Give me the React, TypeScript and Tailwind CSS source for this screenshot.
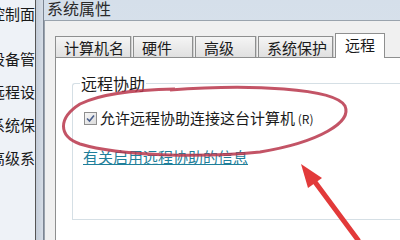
import React from 'react';

const font = { fontFamily: '"Noto Sans CJK SC", "Noto Sans", sans-serif' };

const tabs = [
  { t: '计算机名', w: 'w-[76px]' },
  { t: '硬件', w: 'w-[60px]' },
  { t: '高级', w: 'w-[61px]' },
  { t: '系统保护', w: 'w-[75px]' },
];
const sideItems = ['控制面', '设备管', '远程设', '系统保', '高级系'];

const App: React.FC = () => {
  return (
    <div className="relative w-[400px] h-[240px] overflow-hidden flex bg-white text-[#1a1a1a]" style={font}>
      {/* Left control panel strip */}
      <div className="w-[36px] shrink-0 bg-[#eef2f7] border-r border-[#555] flex flex-col pt-[3px] gap-[11px] overflow-hidden">
        {sideItems.map((t, i) => (
          <div key={t} className={`text-[15px] leading-[22px] whitespace-nowrap ml-[-10px] ${i === 0 ? 'mb-[12px]' : ''}`}>
            {t}
          </div>
        ))}
      </div>

      {/* Window frame */}
      <div className="w-[8px] shrink-0 bg-gradient-to-r from-[#c3ccd8] to-[#d6dde6] border-r border-[#7c8592]" />

      <div className="flex-1 flex flex-col bg-gradient-to-b from-[#d5dfea] to-[#e2e8ef]">
        <div className="h-[25px] shrink-0 pl-[3px] text-[16px] leading-[26px] text-[#2a2a2a] mt-[-5px]">系统属性</div>

        <div className="flex-1 flex flex-col bg-[#f0f0f0] border-t border-l border-[#9aa3ad] pl-[10px] pt-[15px]">
          {/* Tabs */}
          <div className="flex items-end h-[21px] shrink-0">
            {tabs.map(({ t, w }) => (
              <div
                key={t}
                className={`${w} h-[21px] pl-[8px] border border-b-0 border-r-0 border-[#8e8f8f] bg-gradient-to-b from-[#f5f5f5] to-[#e0e0e0] text-[15px] leading-[21px] whitespace-nowrap shadow-[inset_-1px_0_0_#8e8f8f,1px_0_0_#d0d0d0] mr-[2px]`}
              >
                {t}
              </div>
            ))}
            <div className="h-[25px] px-[9px] border border-b-0 border-[#8e8f8f] bg-white text-[15px] leading-[22px] whitespace-nowrap relative z-10 mb-[-1px]">
              远程
            </div>
          </div>

          {/* Tab panel */}
          <div className="flex-1 bg-white border-t border-l border-[#8e8f8f] pl-[16px] pt-[25px]">
            <div className="relative h-[137px] border border-r-0 border-[#d5dfe5] rounded-tl-[3px] bg-white">
              <div className="absolute left-[7px] top-[-12px] bg-white px-[1px] text-[16px] leading-[22px]">远程协助</div>
              <div className="flex items-center gap-[3px] mt-[24px] ml-[11px]">
                <div className="w-[13px] h-[13px] border border-[#8f8f8f] bg-gradient-to-br from-[#f6f6f6] to-[#dcdcdc] flex items-center justify-center">
                  <svg width="9" height="9" viewBox="0 0 9 9">
                    <path d="M1 4.5 L3.5 7 L8 1.5" fill="none" stroke="#4a5f8c" strokeWidth="1.6" />
                  </svg>
                </div>
                <span className="text-[15px] leading-[20px] whitespace-nowrap">
                  允许远程协助连接这台计算机<span className="text-[12px]"> (R)</span>
                </span>
              </div>
              <div className="mt-[18px] ml-[10px] text-[15px] leading-[20px] text-[#1f7f9a] underline whitespace-nowrap">
                有关启用远程协助的信息
              </div>
            </div>
          </div>
        </div>
      </div>

      {/* Red annotation */}
      <svg className="absolute left-0 top-0 pointer-events-none" width="400" height="240" viewBox="0 0 400 240">
        <path
          d="M170 90 C 250 84, 335 88, 345 106 C 352 122, 320 142, 260 152 C 200 158, 120 156, 80 144 C 58 136, 58 118, 80 104 C 100 94, 130 90, 175 89"
          fill="none"
          stroke="#b8364b"
          strokeWidth="3"
          opacity="0.85"
        />
        <path d="M358 240 L312 178" stroke="#e23a3a" strokeWidth="5" strokeLinecap="round" />
        <path d="M301 164 L322 178 L308 188 Z" fill="#e23a3a" />
      </svg>
    </div>
  );
};

export default App;
